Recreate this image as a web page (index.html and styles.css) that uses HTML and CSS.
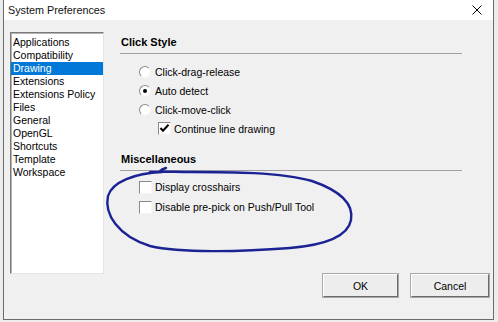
FILE: index.html
```html
<!DOCTYPE html>
<html lang="en">
<head>
<meta charset="UTF-8">
<meta name="viewport" content="width=device-width, initial-scale=1.0">
<title>System Preferences</title>
<link rel="stylesheet" href="styles.css">
</head>
<body>
    <div class="window">
        <div class="titlebar">
            <span class="title">System Preferences</span>
            <svg class="close" width="10" height="10" viewBox="0 0 10 10">
                <path d="M0.5 0.5 L9.5 9.5 M9.5 0.5 L0.5 9.5" stroke="#000" stroke-width="1" fill="none"/>
            </svg>
        </div>
        <div class="main">
            <ul class="listbox">
                <li>Applications</li>
                <li>Compatibility</li>
                <li class="selected">Drawing</li>
                <li>Extensions</li>
                <li>Extensions Policy</li>
                <li>Files</li>
                <li>General</li>
                <li>OpenGL</li>
                <li>Shortcuts</li>
                <li>Template</li>
                <li>Workspace</li>
            </ul>
            <div class="panel">
                <div class="heading">Click Style</div>
                <div class="options first">
                    <div class="row"><span class="radio"></span>Click-drag-release</div>
                    <div class="row"><span class="radio checked"></span>Auto detect</div>
                    <div class="row"><span class="radio"></span>Click-move-click</div>
                    <div class="row sub">
                        <span class="check">
                            <svg width="11" height="11" viewBox="0 0 11 11"><path d="M1.5 5 L4 7.8 L9.5 1.8" stroke="#000" stroke-width="2" fill="none"/></svg>
                        </span>Continue line drawing
                    </div>
                </div>
                <div class="heading misc">Miscellaneous</div>
                <div class="options second">
                    <div class="row tall"><span class="check"></span>Display crosshairs</div>
                    <div class="row tall"><span class="check"></span>Disable pre-pick on Push/Pull Tool</div>
                </div>
            </div>
        </div>
        <div class="footer">
            <button class="btn default">OK</button>
            <button class="btn cancel">Cancel</button>
        </div>
    </div>

    <!-- pen mark drawn over the screenshot -->
    <svg class="scribble" width="498" height="322" viewBox="0 0 498 322">
        <path d="M166 168 C160 170 158 172 162 172 C135 173 112 182 108 196 C104 214 118 236 150 246 C180 253 240 252 290 248 C325 245 348 236 351 220 C354 203 338 190 312 181 C280 172 230 172 190 172 C175 172 160 171 150 172"
              stroke="#1b2394" stroke-width="2.4" fill="none" stroke-linecap="round" stroke-linejoin="round"/>
    </svg>
</body>
</html>
```

FILE: styles.css
```css
body {
    margin: 0;
    background: #ececec;
    font-family: "Liberation Sans", Arial, sans-serif;
    font-size: 10.5px;
    color: #000;
    position: relative;
    width: 498px;
    height: 322px;
    overflow: hidden;
}
.window {
    margin-left: 3px;
    width: 491px;
    height: 320px;
    box-sizing: border-box;
    border: 1px solid #6b6b6b;
    border-top: none;
    background: #f0f0f0;
    display: flex;
    flex-direction: column;
}
.titlebar {
    height: 23px;
    background: #fff;
    display: flex;
    align-items: center;
    justify-content: space-between;
    padding: 0 11px 0 4px;
}
.title {
    font-size: 10.8px;
    color: #111;
}
.close {
    display: block;
}
.main {
    display: flex;
    padding: 12px 0 0 6px;
}
.listbox {
    list-style: none;
    margin: 0;
    padding: 3px 0 0 0;
    width: 94px;
    height: 242px;
    box-sizing: border-box;
    background: #fff;
    border: 1px solid;
    border-color: #7a7a7a #e4e4e4 #e4e4e4 #7a7a7a;
    box-shadow: inset 1px 1px 0 #b5b5b5;
}
.listbox li {
    height: 13px;
    line-height: 13px;
    padding-left: 2px;
    white-space: nowrap;
}
.listbox li.selected {
    background: #0078d7;
    color: #fff;
}
.panel {
    width: 342px;
    margin: 2px 0 0 16px;
}
.heading {
    margin-top: 1px;
    padding: 0 0 4px 1px;
    line-height: 14px;
    font-size: 11px;
    font-weight: bold;
    border-bottom: 1px solid #a0a0a0;
}
.heading.misc {
    margin-top: 14px;
}
.options {
    padding-left: 19px;
}
.options.first {
    margin-top: 8px;
}
.options.second {
    margin-top: 6px;
}
.row {
    height: 19px;
    display: flex;
    align-items: center;
}
.row.tall {
    height: 20px;
}
.row.sub {
    padding-left: 19px;
}
.radio {
    width: 12px;
    height: 12px;
    box-sizing: border-box;
    border-radius: 50%;
    border: 1px solid;
    border-color: #8a8a8a #f4f4f4 #f4f4f4 #8a8a8a;
    background: #fff;
    margin-right: 4px;
    display: flex;
    align-items: center;
    justify-content: center;
}
.radio.checked::after {
    content: "";
    width: 4px;
    height: 4px;
    border-radius: 50%;
    background: #000;
}
.check {
    width: 13px;
    height: 13px;
    box-sizing: border-box;
    border: 1px solid;
    border-color: #8a8a8a #f4f4f4 #f4f4f4 #8a8a8a;
    background: #fff;
    margin-right: 3px;
    display: flex;
    align-items: center;
    justify-content: center;
}
.check svg {
    display: block;
}
.footer {
    margin-top: auto;
    display: flex;
    justify-content: flex-end;
    gap: 13px;
    padding: 0 4px 22px 0;
}
.btn {
    height: 23px;
    font-family: "Liberation Sans", Arial, sans-serif;
    font-size: 10.5px;
    color: #000;
    background: #ededed;
    border: 1px solid;
    border-color: #fff #6a6a6a #6a6a6a #fff;
    box-shadow: 0 0 0 1px #a8a8a8;
    padding: 0;
}
.btn.default {
    width: 75px;
}
.btn.cancel {
    width: 78px;
}
.scribble {
    position: absolute;
    left: 0;
    top: 0;
    pointer-events: none;
}
```
